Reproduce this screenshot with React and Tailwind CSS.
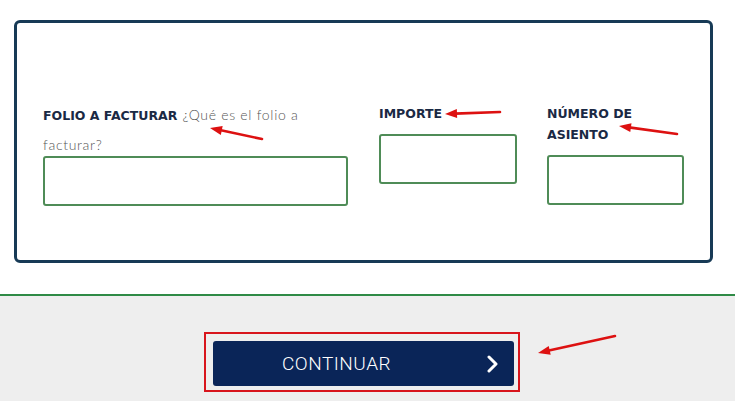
import React from "react";

function Arrow({ x1, y1, x2, y2 }) {
  const dx = x2 - x1;
  const dy = y2 - y1;
  const len = Math.sqrt(dx * dx + dy * dy);
  const ux = dx / len;
  const uy = dy / len;
  const hl = 12;
  const hw = 4.5;
  const bx = x2 - ux * hl;
  const by = y2 - uy * hl;
  const px = -uy;
  const py = ux;
  const pts = `${x2},${y2} ${bx + px * hw},${by + py * hw} ${bx - px * hw},${by - py * hw}`;
  return (
    <g>
      <line x1={x1} y1={y1} x2={bx + ux * 2} y2={by + uy * 2} stroke="#dd1111" strokeWidth="2.6" strokeLinecap="round" />
      <polygon points={pts} fill="#dd1111" />
    </g>
  );
}

export default function App() {
  const label = "text-[#1a2944] font-bold text-[12.5px] uppercase";
  return (
    <div className="relative w-[735px] h-[401px] overflow-hidden bg-white" style={{ fontFamily: "Lato, 'Open Sans', sans-serif" }}>
      <div className="pt-[20px] pl-[14px]">
        <div className="w-[699px] h-[243px] border-[3px] border-[#173a56] rounded-[6px] flex items-start pt-[80px] pl-[26px]">
          <div className="w-[305px] mr-[31px] flex flex-col">
            <div className="-mt-[3px] leading-[29px]" style={{ fontFamily: "'DejaVu Sans', sans-serif" }}>
              <span className={label}>FOLIO A FACTURAR</span>{" "}
              <span className="text-[14px] tracking-[0.7px] text-[#555555] font-light" style={{ fontFamily: "Lato, sans-serif" }}>
                ¿Qué es el folio a facturar?
              </span>
            </div>
            <div className="-mt-[3px] h-[50px] border-2 border-[#4f8c57] rounded-[3px] bg-white" />
          </div>
          <div className="w-[138px] mr-[30px] flex flex-col">
            <div className={`${label} leading-[21px] mb-[10px]`} style={{ fontFamily: "'DejaVu Sans', sans-serif" }}>
              IMPORTE
            </div>
            <div className="h-[50px] border-2 border-[#4f8c57] rounded-[3px] bg-white" />
          </div>
          <div className="w-[137px] flex flex-col">
            <div className={`${label} leading-[21px] mb-[10px] w-[100px]`} style={{ fontFamily: "'DejaVu Sans', sans-serif" }}>
              NÚMERO DE ASIENTO
            </div>
            <div className="h-[50px] border-2 border-[#4f8c57] rounded-[3px] bg-white" />
          </div>
        </div>
      </div>
      <div className="mt-[31px] h-[2px] bg-[#2f8a46]" />
      <div className="h-[105px] bg-[#eeeeee] pt-[36px] pl-[204px]">
        <div className="w-[316px] h-[60px] border-2 border-[#d8151c] pl-[7px] pt-[7px]">
          <div className="w-[301px] h-[45px] bg-[#0a2558] rounded-[3px] flex items-center">
            <span className="ml-[69px] text-white text-[19px] font-light leading-none tracking-[0.5px]" style={{ fontFamily: "Roboto, 'Liberation Sans', sans-serif" }}>
              CONTINUAR
            </span>
            <svg className="ml-auto mr-[15px]" width="13" height="18" viewBox="0 0 13 18">
              <polyline points="3,2 10,9 3,16" fill="none" stroke="white" strokeWidth="3" strokeLinejoin="round" strokeLinecap="round" />
            </svg>
          </div>
        </div>
      </div>
      <svg className="absolute inset-0 pointer-events-none" width="735" height="401">
        <Arrow x1={262} y1={139} x2={210} y2={128} />
        <Arrow x1={500} y1={112} x2={445} y2={114} />
        <Arrow x1={677} y1={134} x2={619} y2={126} />
        <Arrow x1={615} y1={336} x2={538} y2={353} />
      </svg>
    </div>
  );
}
